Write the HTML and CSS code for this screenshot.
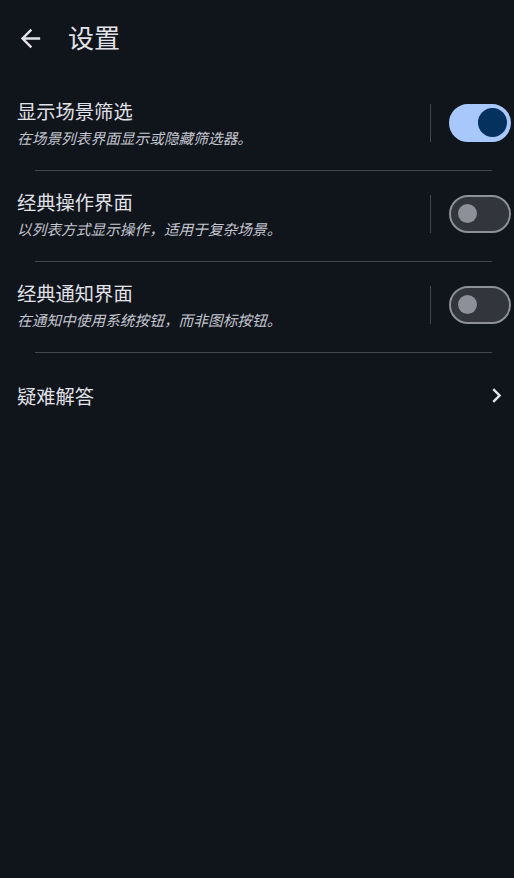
FILE: index.html
```html
<!DOCTYPE html>
<html lang="zh-CN">
<head>
<meta charset="utf-8">
<title>设置</title>
<link rel="stylesheet" href="styles.css">
</head>
<body>
<div class="app">
  <header class="topbar">
    <button class="back" aria-label="返回">
      <svg viewBox="0 0 24 24" width="29" height="29"><path fill="currentColor" d="M20 11H7.83l5.59-5.59L12 4l-8 8 8 8 1.41-1.41L7.83 13H20v-2z"/></svg>
    </button>
    <h1 class="title">设置</h1>
  </header>
  <main class="list">
    <div class="row">
      <div class="texts">
        <div class="row-title">显示场景筛选</div>
        <div class="row-sub">在场景列表界面显示或隐藏筛选器。</div>
      </div>
      <div class="vsep"></div>
      <div class="switch on"><span class="thumb"></span></div>
    </div>
    <div class="divider"></div>
    <div class="row">
      <div class="texts">
        <div class="row-title">经典操作界面</div>
        <div class="row-sub">以列表方式显示操作，适用于复杂场景。</div>
      </div>
      <div class="vsep"></div>
      <div class="switch"><span class="thumb"></span></div>
    </div>
    <div class="divider"></div>
    <div class="row">
      <div class="texts">
        <div class="row-title">经典通知界面</div>
        <div class="row-sub">在通知中使用系统按钮，而非图标按钮。</div>
      </div>
      <div class="vsep"></div>
      <div class="switch"><span class="thumb"></span></div>
    </div>
    <div class="divider"></div>
    <div class="row link">
      <div class="row-title">疑难解答</div>
      <svg class="chev" viewBox="0 0 24 24" width="29" height="29"><path fill="currentColor" d="M10 6L8.59 7.41 13.17 12l-4.58 4.59L10 18l6-6z"/></svg>
    </div>
  </main>
</div>
</body>
</html>
```
FILE: styles.css
```css
* { box-sizing: border-box; }
html, body {
  margin: 0;
  padding: 0;
  background: #10141b;
}
body {
  font-family: "Noto Sans CJK SC", "Noto Sans", Roboto, sans-serif;
  color: #e2e2e9;
  width: 514px;
  min-height: 878px;
}
.topbar {
  height: 76px;
  display: flex;
  align-items: center;
  padding-left: 16px;
}
.back {
  background: none;
  border: 0;
  padding: 0;
  width: 29px;
  height: 29px;
  color: #e2e2e9;
  display: flex;
}
.title {
  margin: 0 0 2px 23px;
  font-size: 26px;
  font-weight: 400;
  line-height: 32px;
  color: #e2e2e9;
}
.list {
  padding-top: 4px;
}
.row {
  display: flex;
  align-items: center;
  padding: 18px 3px 22px 17px;
}
.texts {
  flex: 1;
  display: flex;
  flex-direction: column;
  gap: 4px;
}
.row-title {
  font-size: 19.3px;
  line-height: 26px;
  color: #e2e2e9;
}
.row-sub {
  font-size: 14.7px;
  line-height: 20px;
  font-style: italic;
  color: #c4c6d0;
}
.vsep {
  width: 1px;
  height: 38px;
  background: #44474e;
  margin-right: 18px;
}
.switch {
  position: relative;
  width: 62px;
  height: 38px;
  border-radius: 19px;
  border: 2.4px solid #8e9099;
  background: #32353b;
  flex: none;
}
.switch .thumb {
  position: absolute;
  width: 19px;
  height: 19px;
  border-radius: 50%;
  background: #8e9099;
  left: 7px;
  top: 7.1px;
}
.switch.on {
  background: #a8c8fb;
  border-color: #a8c8fb;
}
.switch.on .thumb {
  width: 29px;
  height: 29px;
  background: #04315e;
  left: auto;
  right: 2.2px;
  top: 2.1px;
}
.divider {
  height: 1px;
  background: #44474e;
  margin: 0 22px 0 35px;
}
.row.link {
  padding: 28px 3px 0 17px;
  justify-content: space-between;
}
.chev {
  color: #e2e2e9;
  flex: none;
}
```
